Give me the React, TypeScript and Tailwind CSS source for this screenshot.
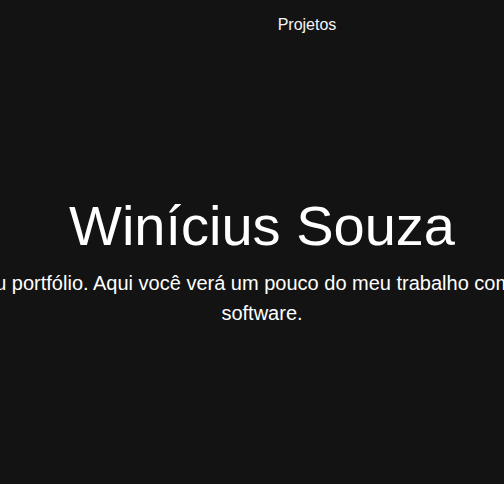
export default function App() {
  return (
    <div
      className="w-full min-h-[484px] overflow-hidden bg-[#131313] text-white"
      style={{ fontFamily: '"Liberation Sans", Arial, sans-serif' }}
    >
      <div className="w-[524px] flex flex-col">
        <header className="flex justify-center pt-[13px]">
          <a className="ml-[90px] text-base leading-6 text-[#f5f5f5]">Projetos</a>
        </header>
        <main className="flex flex-col items-center mt-[147px]">
          <h1 className="text-[56px] leading-[84px] font-normal whitespace-nowrap">Winícius Souza</h1>
          <p className="text-[20px] leading-[30px] text-center whitespace-nowrap">
            Seja bem-vindo ao meu portfólio. Aqui você verá um pouco do meu trabalho como desenvolvedor web de
          </p>
          <p className="text-[20px] leading-[30px] text-center whitespace-nowrap">software.</p>
        </main>
      </div>
    </div>
  );
}
